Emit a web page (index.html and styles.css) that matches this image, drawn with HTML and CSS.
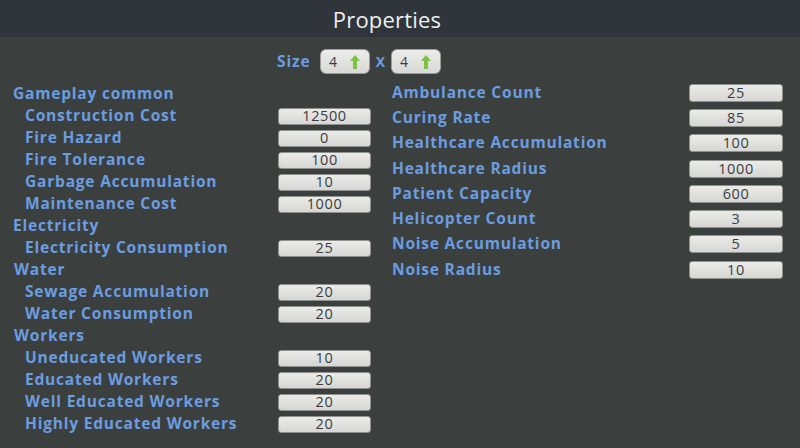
FILE: index.html
```html
<!DOCTYPE html>
<html>
<head>
<meta charset="utf-8">
<link rel="stylesheet" href="styles.css">
</head>
<body>
<div class="panel">
  <div class="header"><span class="title">Properties</span></div>
  <div class="size-row">
    <span class="size-label">Size</span>
    <div class="spin"><span class="spin-val">4</span><svg class="arrow" width="10" height="14" viewBox="0 0 10 14"><polygon points="5,0 10,6 7,6 7,14 3,14 3,6 0,6" fill="#7cc242"/></svg></div>
    <span class="size-x">X</span>
    <div class="spin"><span class="spin-val">4</span><svg class="arrow" width="10" height="14" viewBox="0 0 10 14"><polygon points="5,0 10,6 7,6 7,14 3,14 3,6 0,6" fill="#7cc242"/></svg></div>
  </div>
  <div class="main">
    <div class="col-left">
      <div class="row"><span class="label head">Gameplay common</span></div>
      <div class="row"><span class="label sub">Construction Cost</span><span class="field">12500</span></div>
      <div class="row"><span class="label sub">Fire Hazard</span><span class="field">0</span></div>
      <div class="row"><span class="label sub">Fire Tolerance</span><span class="field">100</span></div>
      <div class="row"><span class="label sub">Garbage Accumulation</span><span class="field">10</span></div>
      <div class="row"><span class="label sub">Maintenance Cost</span><span class="field">1000</span></div>
      <div class="row"><span class="label head">Electricity</span></div>
      <div class="row"><span class="label sub">Electricity Consumption</span><span class="field">25</span></div>
      <div class="row"><span class="label head h2">Water</span></div>
      <div class="row"><span class="label sub">Sewage Accumulation</span><span class="field">20</span></div>
      <div class="row"><span class="label sub">Water Consumption</span><span class="field">20</span></div>
      <div class="row"><span class="label head h2">Workers</span></div>
      <div class="row"><span class="label sub">Uneducated Workers</span><span class="field">10</span></div>
      <div class="row"><span class="label sub">Educated Workers</span><span class="field">20</span></div>
      <div class="row"><span class="label sub">Well Educated Workers</span><span class="field">20</span></div>
      <div class="row"><span class="label sub">Highly Educated Workers</span><span class="field">20</span></div>
    </div>
    <div class="col-right">
      <div class="rrow"><span class="label">Ambulance Count</span><span class="field rfield">25</span></div>
      <div class="rrow"><span class="label">Curing Rate</span><span class="field rfield">85</span></div>
      <div class="rrow"><span class="label">Healthcare Accumulation</span><span class="field rfield">100</span></div>
      <div class="rrow"><span class="label">Healthcare Radius</span><span class="field rfield">1000</span></div>
      <div class="rrow"><span class="label">Patient Capacity</span><span class="field rfield">600</span></div>
      <div class="rrow"><span class="label">Helicopter Count</span><span class="field rfield">3</span></div>
      <div class="rrow"><span class="label">Noise Accumulation</span><span class="field rfield">5</span></div>
      <div class="rrow"><span class="label">Noise Radius</span><span class="field rfield">10</span></div>
    </div>
  </div>
</div>
</body>
</html>
```
FILE: styles.css
```css
html, body {
  margin: 0;
  padding: 0;
}
body {
  width: 800px;
  height: 448px;
  overflow: hidden;
  background: #3b403f;
  font-family: "Open Sans", "Noto Sans", sans-serif;
}
.panel {
  width: 800px;
  height: 448px;
  display: flex;
  flex-direction: column;
}
.header {
  height: 37px;
  background: #30353b;
  display: flex;
  align-items: center;
  justify-content: center;
  padding-right: 26px;
  box-sizing: border-box;
}
.title {
  color: #eef0f0;
  font-size: 22px;
  font-weight: 500;
  letter-spacing: 0.2px;
}
.size-row {
  margin-top: 12px;
  height: 25px;
  display: flex;
  align-items: center;
  padding-left: 277px;
}
.size-label {
  color: #6b9de0;
  font-weight: 700;
  font-size: 15.5px;
  letter-spacing: 0.9px;
  width: 43px;
  padding-bottom: 1px;
}
.size-x {
  color: #6b9de0;
  font-weight: 700;
  font-size: 14px;
  width: 15px;
  text-align: center;
  margin: 0 3px 0 3px;
}
.spin {
  width: 50px;
  height: 25px;
  box-sizing: border-box;
  border-radius: 6px;
  border: 1px solid #9a9d9a;
  background: linear-gradient(#ececea, #d8d9d6);
  display: flex;
  align-items: center;
  padding-left: 8px;
  padding-right: 9px;
  justify-content: space-between;
}
.spin-val {
  color: #3a3d40;
  font-size: 14px;
}
.arrow {
  display: block;
}
.main {
  display: grid;
  grid-template-columns: 392px 408px;
  margin-top: 8px;
}
.col-left {
  display: flex;
  flex-direction: column;
}
.row {
  height: 22px;
  display: grid;
  grid-template-columns: 278px 93px;
  align-items: center;
}
.label {
  color: #6b9de0;
  font-weight: 700;
  font-size: 15.5px;
  letter-spacing: 0.8px;
  white-space: nowrap;
  padding-bottom: 2px;
}
.head {
  padding-left: 13px;
}
.h2 {
  padding-left: 14px;
}
.sub {
  padding-left: 25px;
}
.field {
  height: 17px;
  box-sizing: border-box;
  border: 1px solid #8e918e;
  border-radius: 3px;
  background: linear-gradient(#ebebe8, #d6d7d4);
  color: #3a3d40;
  font-size: 14.5px;
  line-height: 14px;
  text-align: center;
  letter-spacing: 0.6px;
}
.col-right {
  display: flex;
  flex-direction: column;
  margin-top: -2px;
}
.rrow {
  height: 25.3px;
  display: grid;
  grid-template-columns: 297px 94px;
  align-items: center;
}
.rfield {
  height: 18px;
  line-height: 15px;
}
```
